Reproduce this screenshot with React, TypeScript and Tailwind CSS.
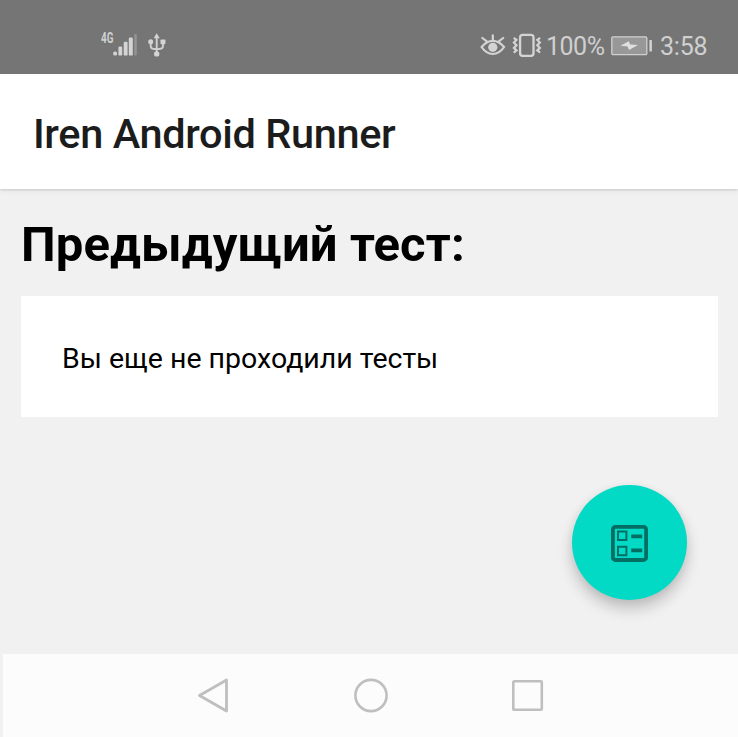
import React from 'react';

function Signal() {
  return (
    <svg width="24" height="24" viewBox="0 0 24 24" className="block" fill="#d4d4d4">
      <rect x="0.2" y="18.4" width="3.8" height="4.2" rx="1.6" />
      <rect x="5.4" y="13.6" width="3.8" height="9" rx="1.2" />
      <rect x="10.700" y="8.800" width="3.900" height="13.800" rx="1.200" />
      <rect x="15.800" y="4.600" width="4" height="18" rx="1.200" />
      <rect x="21.200" y="1" width="2.600" height="21.600" rx="1" fill="#939393" />
    </svg>
  );
}

function Usb() {
  return (
    <svg width="18" height="24" viewBox="0 0 18 24" className="block" fill="none" stroke="#d0d0d0" strokeWidth="1.900">
      <path d="M8.700 3v17M2.700 9v4q0 2.400 2.200 2.800l3.800.4 3.800-.4q2.500-.4 2.500-2.800V9" />
      <g fill="#d4d4d4" stroke="none">
        <path d="M8.700 0.200 11.700 5.200H5.700z" />
        <circle cx="2.700" cy="8.700" r="2.500" />
        <rect x="12.500" y="6.400" width="4.900" height="4.800" rx=".8" />
        <circle cx="8.700" cy="20.900" r="2.700" />
      </g>
    </svg>
  );
}

function Eye() {
  return (
    <svg width="26" height="24" viewBox="0 0 26 24" className="block" fill="none" stroke="#d4d4d4" strokeWidth="2.200" strokeLinecap="round">
      <path d="M1.600 14Q6.500 7.800 12.800 7.800T24.100 14Q19.300 21 12.800 21T1.600 14z" />
      <path d="M12.800 7V2.400M6.800 8.400 2.400 5M18.800 8.400l4.400-3.400" strokeWidth="2.200" />
      <circle cx="12.800" cy="14.300" r="4.600" fill="#d4d4d4" stroke="none" />
    </svg>
  );
}

function Vibrate() {
  return (
    <svg width="30" height="24" viewBox="0 0 30 24" className="block" fill="none" stroke="#d4d4d4" strokeWidth="2.200">
      <rect x="8.100" y="1.900" width="13.400" height="21" rx="2.600" strokeWidth="2.300" />
      <path d="M1.700 4.800 4.500 6.900 1.900 9.600l2.600 2.600-2.600 2.700 2.600 2.600-2.800 2.100M28.100 4.800 25.300 6.900l2.600 2.700-2.600 2.600 2.600 2.700-2.600 2.600 2.800 2.100" />
    </svg>
  );
}

function Battery() {
  return (
    <svg width="42" height="20" viewBox="0 0 42 20" className="block">
      <rect x=".8" y=".8" width="35" height="17.800" rx="1.200" fill="#989898" stroke="#d0d0d0" strokeWidth="1.300" />
      <path d="m9.500 9.800 8.300-4.600 1.400 3.300 7.800.5-9 5-1.400-3.600z" fill="#e0e0e0" />
      <rect x="38.400" y="4" width="2.500" height="11.500" rx=".4" fill="#d4d4d4" />
    </svg>
  );
}

export default function App() {
  return (
    <div className="flex h-[737px] w-[738px] flex-col overflow-hidden bg-[#f1f1f1] font-['Roboto','Noto_Sans',sans-serif] text-black">
      <header className="z-20 flex h-[74px] shrink-0 items-start bg-[#757575] pr-[30px] pl-[101px] pt-[33px] text-[#d0d0d0]">
        <span className="-mt-px w-[12px] text-[14.500px] leading-[14px] font-bold"><span className="inline-block origin-left scale-x-[0.68]">4G</span></span>
        <Signal />
        <span className="ml-[11px]"><Usb /></span>
        <div className="ml-auto flex">
          <Eye />
          <span className="ml-[6px]"><Vibrate /></span>
          <span className="mt-px ml-[4px] w-[60px] text-[25px] leading-[26px] tracking-[-0.5px] whitespace-nowrap">100%</span>
          <span className="mt-[3px] ml-[5px]"><Battery /></span>
          <span className="mt-px ml-[7px] w-[48px] text-[25px] leading-[26px] tracking-[-0.2px]">3:58</span>
        </div>
      </header>
      <div className="z-10 flex h-[115px] shrink-0 items-center bg-white pt-[4px] pl-[33px] shadow-[0_1px_2px_rgba(0,0,0,0.12),0_2px_6px_rgba(0,0,0,0.06)]">
        <h1 className="text-[41.500px] leading-[50px] font-medium tracking-[-0.380px] whitespace-nowrap text-[#1c1c1c]">Iren Android Runner</h1>
      </div>
      <main className="relative flex-1 pt-[26px] pr-[20px] pl-[21px]">
        <h2 className="h-[81px] text-[49px] leading-[60px] font-bold tracking-[0.130px] whitespace-nowrap">Предыдущий тест:</h2>
        <section className="flex h-[121px] items-center bg-white pt-[4px] pl-[41px]">
          <p className="text-[28.500px] leading-[34px] whitespace-nowrap">Вы еще не проходили тесты</p>
        </section>
        <button className="absolute right-[51px] bottom-[54px] flex h-[115px] w-[115px] items-center justify-center rounded-full bg-[#03dac5] shadow-[0_9px_15px_rgba(0,0,0,0.2),0_2px_8px_rgba(0,0,0,0.06)]">
          <svg width="38" height="38" viewBox="0 0 38 38" fill="none" stroke="#026e64">
            <rect x="1.900" y="2.800" width="33.200" height="33.200" rx="2.500" strokeWidth="3.800" />
            <path d="M7 7.600h8.400v8.400H7zM7 22.800h8.400v8.400H7z" strokeWidth="2" />
            <path d="M20.200 12.400h11M20.200 26.400h11" strokeWidth="3.600" />
          </svg>
        </button>
      </main>
      <nav className="ml-[3px] flex h-[83px] shrink-0 items-center bg-[#fcfcfc] pl-[194px]">
        <svg width="32" height="36" viewBox="0 0 32 36" fill="none" stroke="#bfbfbf" strokeWidth="2.800" strokeLinejoin="round">
          <path d="M2.500 17.500 29.500 2v31z" />
        </svg>
        <svg className="ml-[124px]" width="36" height="36" viewBox="0 0 36 36" fill="none" stroke="#bfbfbf" strokeWidth="2.600">
          <circle cx="18" cy="17.500" r="15.600" />
        </svg>
        <svg className="ml-[121px]" width="36" height="36" viewBox="0 0 36 36" fill="none" stroke="#bfbfbf" strokeWidth="2.600">
          <rect x="3.300" y="3.300" width="28.500" height="28.500" rx="1" />
        </svg>
      </nav>
    </div>
  );
}
